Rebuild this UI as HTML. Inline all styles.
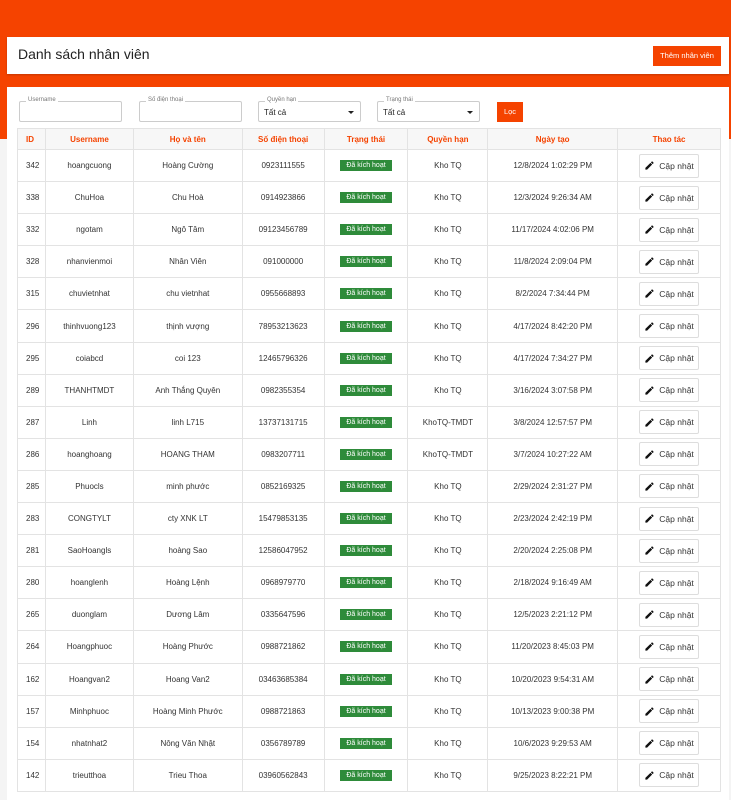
<!DOCTYPE html>
<html><head><meta charset="utf-8"><style>
*{box-sizing:border-box;margin:0;padding:0}
body{width:731px;height:800px;overflow:hidden;background:#f4f4f4;font-family:"Liberation Sans",sans-serif;position:relative}
.top{position:absolute;left:0;top:0;width:731px;height:139px;background:#f54300}
.c1{position:absolute;left:7px;top:37px;width:722px;height:37px;background:#fff;box-shadow:0 1px 2px rgba(0,0,0,.2)}
.c1 h1{position:absolute;left:11px;top:9px;font-size:14px;font-weight:normal;color:#222}
.btn{position:absolute;background:#f54300;color:#fff;font-size:7.5px;text-align:center}
.c2{position:absolute;left:7px;top:87px;width:722px;height:713px;background:#fff}
.inp{position:absolute;top:101px;height:21px;border:1px solid #ccc;border-radius:2px}
.inp span{position:absolute;top:-5px;left:6px;background:#fff;padding:0 2px;font-size:6px;color:#777}
.inp b{position:absolute;left:5px;top:6px;font-size:8px;font-weight:normal;color:#222}
.inp i{position:absolute;right:6px;top:9px;border-left:3px solid transparent;border-right:3px solid transparent;border-top:3px solid #222}
table{position:absolute;left:17px;top:128px;width:704px;border-collapse:collapse;font-size:8px;color:#333}
td,th{border:1px solid #e3e3e3;text-align:center}
th{height:21px;color:#f54300;font-size:8px;background:#f7f7f7}
td{height:32.1px}
td:first-child,th:first-child{text-align:left;padding-left:8px}
.g{display:inline-block;background:#2e8b3a;color:#fff;font-size:7px;padding:2px 6px}
.u{display:inline-flex;align-items:center;gap:4px;border:1px solid #ddd;border-radius:2px;height:24px;width:60px;justify-content:center;background:#fff;color:#333;font-size:8.5px}
.u svg{width:11px;height:11px}
</style></head><body>
<div class="top"></div>
<div class="c1"><h1>Danh sách nhân viên</h1><div class="btn" style="left:646px;top:9px;width:68px;height:20px;line-height:20px">Thêm nhân viên</div></div>
<div class="c2"></div>
<div class="inp" style="left:19px;width:103px"><span>Username</span></div>
<div class="inp" style="left:139px;width:103px"><span>Số điện thoại</span></div>
<div class="inp" style="left:258px;width:103px"><span>Quyền hạn</span><b>Tất cả</b><i></i></div>
<div class="inp" style="left:377px;width:103px"><span>Trạng thái</span><b>Tất cả</b><i></i></div>
<div class="btn" style="left:497px;top:102px;width:26px;height:20px;line-height:20px">Lọc</div>
<svg width="0" height="0" style="position:absolute"><defs><symbol id="p" viewBox="0 0 24 24"><path d="M3 17.25V21h3.75L17.81 9.94l-3.75-3.75L3 17.25zM20.71 7.04a1 1 0 000-1.41l-2.34-2.34a1 1 0 00-1.41 0l-1.83 1.83 3.75 3.75 1.83-1.83z" fill="#111"/></symbol></defs></svg>
<table>
<colgroup><col style="width:28px"><col style="width:88px"><col style="width:109px"><col style="width:82px"><col style="width:84px"><col style="width:80px"><col style="width:130px"><col style="width:103px"></colgroup>
<tr><th>ID</th><th>Username</th><th>Họ và tên</th><th>Số điện thoại</th><th>Trạng thái</th><th>Quyền hạn</th><th>Ngày tạo</th><th>Thao tác</th></tr>
<tr><td>342</td><td>hoangcuong</td><td>Hoàng Cường</td><td>0923111555</td><td><span class="g">Đã kích hoạt</span></td><td>Kho TQ</td><td>12/8/2024 1:02:29 PM</td><td><span class="u"><svg><use href="#p"/></svg>Cập nhật</span></td></tr>
<tr><td>338</td><td>ChuHoa</td><td>Chu Hoà</td><td>0914923866</td><td><span class="g">Đã kích hoạt</span></td><td>Kho TQ</td><td>12/3/2024 9:26:34 AM</td><td><span class="u"><svg><use href="#p"/></svg>Cập nhật</span></td></tr>
<tr><td>332</td><td>ngotam</td><td>Ngô Tâm</td><td>09123456789</td><td><span class="g">Đã kích hoạt</span></td><td>Kho TQ</td><td>11/17/2024 4:02:06 PM</td><td><span class="u"><svg><use href="#p"/></svg>Cập nhật</span></td></tr>
<tr><td>328</td><td>nhanvienmoi</td><td>Nhân Viên</td><td>091000000</td><td><span class="g">Đã kích hoạt</span></td><td>Kho TQ</td><td>11/8/2024 2:09:04 PM</td><td><span class="u"><svg><use href="#p"/></svg>Cập nhật</span></td></tr>
<tr><td>315</td><td>chuvietnhat</td><td>chu vietnhat</td><td>0955668893</td><td><span class="g">Đã kích hoạt</span></td><td>Kho TQ</td><td>8/2/2024 7:34:44 PM</td><td><span class="u"><svg><use href="#p"/></svg>Cập nhật</span></td></tr>
<tr><td>296</td><td>thinhvuong123</td><td>thịnh vượng</td><td>78953213623</td><td><span class="g">Đã kích hoạt</span></td><td>Kho TQ</td><td>4/17/2024 8:42:20 PM</td><td><span class="u"><svg><use href="#p"/></svg>Cập nhật</span></td></tr>
<tr><td>295</td><td>coiabcd</td><td>coi 123</td><td>12465796326</td><td><span class="g">Đã kích hoạt</span></td><td>Kho TQ</td><td>4/17/2024 7:34:27 PM</td><td><span class="u"><svg><use href="#p"/></svg>Cập nhật</span></td></tr>
<tr><td>289</td><td>THANHTMDT</td><td>Anh Thắng Quyên</td><td>0982355354</td><td><span class="g">Đã kích hoạt</span></td><td>Kho TQ</td><td>3/16/2024 3:07:58 PM</td><td><span class="u"><svg><use href="#p"/></svg>Cập nhật</span></td></tr>
<tr><td>287</td><td>Linh</td><td>linh L715</td><td>13737131715</td><td><span class="g">Đã kích hoạt</span></td><td>KhoTQ-TMDT</td><td>3/8/2024 12:57:57 PM</td><td><span class="u"><svg><use href="#p"/></svg>Cập nhật</span></td></tr>
<tr><td>286</td><td>hoanghoang</td><td>HOANG THAM</td><td>0983207711</td><td><span class="g">Đã kích hoạt</span></td><td>KhoTQ-TMDT</td><td>3/7/2024 10:27:22 AM</td><td><span class="u"><svg><use href="#p"/></svg>Cập nhật</span></td></tr>
<tr><td>285</td><td>Phuocls</td><td>minh phước</td><td>0852169325</td><td><span class="g">Đã kích hoạt</span></td><td>Kho TQ</td><td>2/29/2024 2:31:27 PM</td><td><span class="u"><svg><use href="#p"/></svg>Cập nhật</span></td></tr>
<tr><td>283</td><td>CONGTYLT</td><td>cty XNK LT</td><td>15479853135</td><td><span class="g">Đã kích hoạt</span></td><td>Kho TQ</td><td>2/23/2024 2:42:19 PM</td><td><span class="u"><svg><use href="#p"/></svg>Cập nhật</span></td></tr>
<tr><td>281</td><td>SaoHoangls</td><td>hoàng Sao</td><td>12586047952</td><td><span class="g">Đã kích hoạt</span></td><td>Kho TQ</td><td>2/20/2024 2:25:08 PM</td><td><span class="u"><svg><use href="#p"/></svg>Cập nhật</span></td></tr>
<tr><td>280</td><td>hoanglenh</td><td>Hoàng Lệnh</td><td>0968979770</td><td><span class="g">Đã kích hoạt</span></td><td>Kho TQ</td><td>2/18/2024 9:16:49 AM</td><td><span class="u"><svg><use href="#p"/></svg>Cập nhật</span></td></tr>
<tr><td>265</td><td>duonglam</td><td>Dương Lâm</td><td>0335647596</td><td><span class="g">Đã kích hoạt</span></td><td>Kho TQ</td><td>12/5/2023 2:21:12 PM</td><td><span class="u"><svg><use href="#p"/></svg>Cập nhật</span></td></tr>
<tr><td>264</td><td>Hoangphuoc</td><td>Hoàng Phước</td><td>0988721862</td><td><span class="g">Đã kích hoạt</span></td><td>Kho TQ</td><td>11/20/2023 8:45:03 PM</td><td><span class="u"><svg><use href="#p"/></svg>Cập nhật</span></td></tr>
<tr><td>162</td><td>Hoangvan2</td><td>Hoang Van2</td><td>03463685384</td><td><span class="g">Đã kích hoạt</span></td><td>Kho TQ</td><td>10/20/2023 9:54:31 AM</td><td><span class="u"><svg><use href="#p"/></svg>Cập nhật</span></td></tr>
<tr><td>157</td><td>Minhphuoc</td><td>Hoàng Minh Phước</td><td>0988721863</td><td><span class="g">Đã kích hoạt</span></td><td>Kho TQ</td><td>10/13/2023 9:00:38 PM</td><td><span class="u"><svg><use href="#p"/></svg>Cập nhật</span></td></tr>
<tr><td>154</td><td>nhatnhat2</td><td>Nông Văn Nhật</td><td>0356789789</td><td><span class="g">Đã kích hoạt</span></td><td>Kho TQ</td><td>10/6/2023 9:29:53 AM</td><td><span class="u"><svg><use href="#p"/></svg>Cập nhật</span></td></tr>
<tr><td>142</td><td>trieutthoa</td><td>Trieu Thoa</td><td>03960562843</td><td><span class="g">Đã kích hoạt</span></td><td>Kho TQ</td><td>9/25/2023 8:22:21 PM</td><td><span class="u"><svg><use href="#p"/></svg>Cập nhật</span></td></tr>
</table>
</body></html>
